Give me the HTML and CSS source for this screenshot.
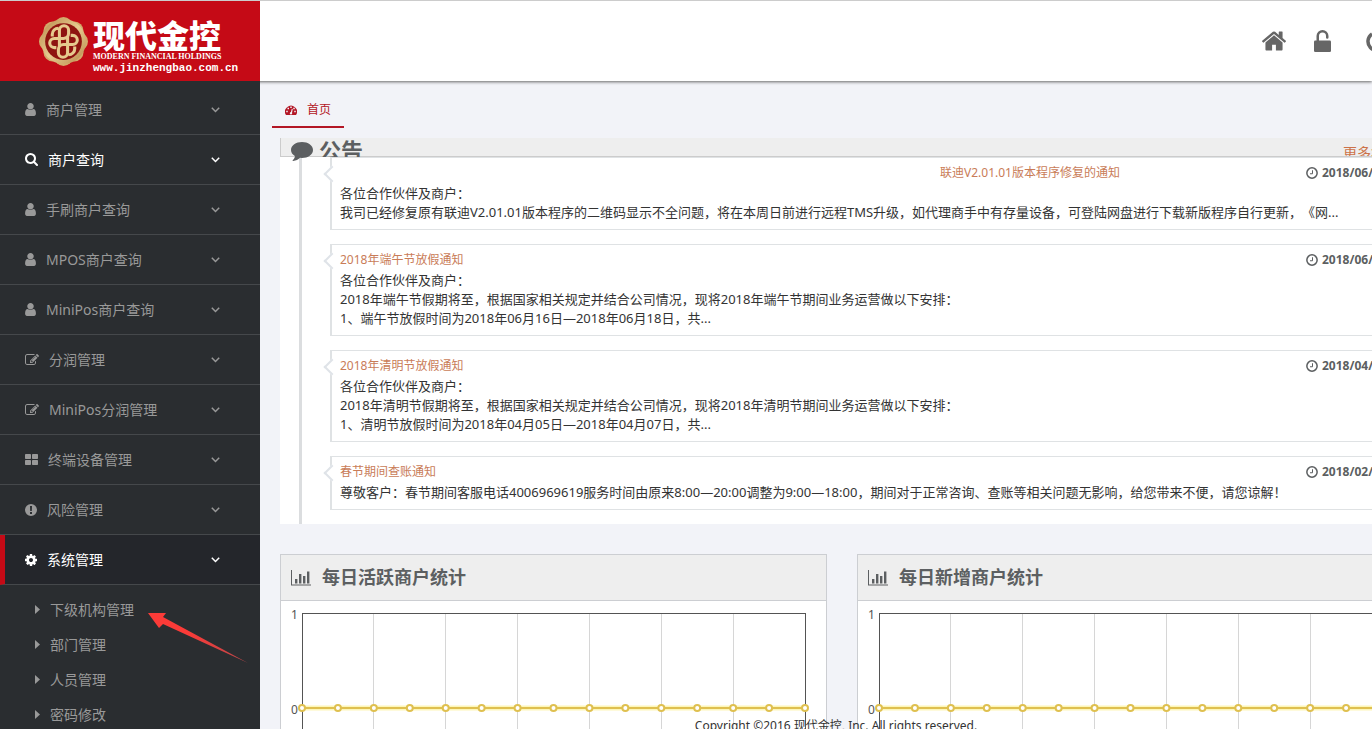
FILE: index.html
```html
<!DOCTYPE html>
<html lang="zh-CN">
<head>
<meta charset="utf-8">
<title>现代金控</title>
<link rel="stylesheet" href="styles.css">
</head>
<body>
<svg class="sprite" aria-hidden="true">
  <symbol id="i-user" viewBox="256 128 1280 1536"><path d="M1536 1399q0 109-62.500 187t-150.500 78h-854q-88 0-150.500-78t-62.500-187q0-85 8.500-160.500t31.500-152 58.500-131 94-89 134.500-34.500q131 128 313 128t313-128q76 0 134.500 34.500t94 89 58.500 131 31.500 152 8.500 160.500zm-256-887q0 159-112.500 271.500t-271.500 112.500-271.500-112.500-112.500-271.500 112.500-271.500 271.500-112.500 271.500 112.500 112.500 271.500z"/></symbol>
  <symbol id="i-search" viewBox="64 128 1664 1664"><path d="M1216 832q0-185-131.500-316.500t-316.500-131.500-316.500 131.500-131.500 316.500 131.500 316.500 316.500 131.500 316.500-131.500 131.500-316.500zm512 832q0 52-38 90t-90 38q-54 0-90-38l-343-342q-179 124-399 124-143 0-273.500-55.500t-225-150-150-225-55.500-273.500 55.500-273.500 150-225 225-150 273.500-55.500 273.500 55.500 225 150 150 225 55.500 273.500q0 220-124 399l343 343q37 37 37 90z"/></symbol>
  <symbol id="i-edit" viewBox="0 128 1792 1536"><path d="M888 1184l116-116-152-152-116 116v56h96v96h56zm440-720q-16-16-33 1l-350 350q-17 17-1 33t33-1l350-350q17-17 1-33zm80 594v190q0 119-84.500 203.500t-203.500 84.500h-832q-119 0-203.500-84.500t-84.500-203.500v-832q0-119 84.500-203.500t203.500-84.500h832q63 0 117 25 15 7 18 23 3 17-9 29l-49 49q-14 14-32 8-23-6-45-6h-832q-66 0-113 47t-47 113v832q0 66 47 113t113 47h832q66 0 113-47t47-113v-126q0-13 9-22l64-64q15-15 35-7t20 29zm-96-738l288 288-672 672h-288v-288zm444 132l-92 92-288-288 92-92q28-28 68-28t68 28l152 152q28 28 28 68t-28 68z"/></symbol>
  <symbol id="i-grid" viewBox="0 0 26 22"><rect width="12" height="10" rx="1.500"/><rect x="14" width="12" height="10" rx="1.500"/><rect y="12" width="12" height="10" rx="1.500"/><rect x="14" y="12" width="12" height="10" rx="1.500"/></symbol>
  <symbol id="i-warn" viewBox="0 0 24 24"><path fill-rule="evenodd" d="M12 0a12 12 0 1 1 0 24a12 12 0 1 1 0-24zM10 4l.4 10h3.200l.4-10zM10 16v4h4v-4z"/></symbol>
  <symbol id="i-cog" viewBox="128 128 1536 1536"><path d="M1152 896q0-106-75-181t-181-75-181 75-75 181 75 181 181 75 181-75 75-181zm512-109v222q0 12-8 23t-20 13l-185 28q-19 54-39 91 35 50 107 138 10 12 10 25t-9 23q-27 37-99 108t-94 71q-12 0-26-9l-138-108q-44 23-91 38-16 136-29 186-7 28-36 28h-222q-14 0-24.500-8.500t-11.500-21.500l-28-184q-49-16-90-37l-141 107q-10 9-25 9-14 0-25-11-126-114-165-168-7-10-7-23 0-12 8-23 15-21 51-66.500t54-70.500q-27-50-41-99l-183-27q-13-2-21-12.500t-8-23.500v-222q0-12 8-23t19-13l186-28q14-46 39-92-40-57-107-138-10-12-10-24 0-10 9-23 26-36 98.500-107.500t94.500-71.500q13 0 26 10l138 107q44-23 91-38 16-136 29-186 7-28 36-28h222q14 0 24.500 8.500t11.500 21.500l28 184q49 16 90 37l142-107q9-9 24-9 13 0 25 10 129 119 165 170 7 8 7 22 0 12-8 23-15 21-51 66.500t-54 70.500q26 50 41 98l183 28q13 2 21 12.500t8 23.500z"/></symbol>
  <symbol id="i-home" viewBox="89 250 1614 1286"><path d="M1472 992v480q0 26-19 45t-45 19h-384v-384h-256v384h-384q-26 0-45-19t-19-45v-480q0-1 .5-3t.5-3l575-474 575 474q1 2 1 6zm223-69l-62 74q-8 9-21 11h-3q-13 0-21-7l-692-577-692 577q-12 8-24 7-13-2-21-11l-62-74q-8-10-7-23.500t11-21.500l719-599q32-26 76-26t76 26l244 204v-195q0-14 9-23t23-9h192q14 0 23 9t9 23v408l219 182q10 8 11 21.500t-7 23.500z"/></symbol>
  <symbol id="i-unlock" viewBox="0 0 34 44"><rect y="21" width="34" height="23" rx="2.500"/><path d="M7.500 22v-10a9.500 9.500 0 0 1 19 0v3" fill="none" stroke="currentColor" stroke-width="5" stroke-linecap="round"/></symbol>
  <symbol id="i-power" viewBox="0 0 22 22"><path d="M6 4a9 9 0 1 0 10 0M11 1v9" fill="none" stroke="currentColor" stroke-width="3.500"/></symbol>
  <symbol id="i-down" viewBox="0 0 9 6"><path d="M.8 .8L4.500 4.500 8.200 .8" fill="none" stroke="currentColor" stroke-width="1.500"/></symbol>
  <symbol id="i-caret" viewBox="0 0 5 9"><path d="M0 0l5 4.500-5 4.500z"/></symbol>
  <symbol id="i-dash" viewBox="0 0 24 20"><path fill-rule="evenodd" d="M2 20A12 12 0 1 1 22 20zM10 16a2.200 2.200 0 1 0 4 0l1.500-8-2-.3-1.600 6.300a2.200 2.200 0 0 0-1.900 2zM10.500 3v3h3v-3zM5 5.500v3h3v-3zM16.500 5.500v3h3v-3zM2.500 11.500v3h3v-3zM18.500 11.500v3h3v-3z"/></symbol>
  <symbol id="i-comment" viewBox="0 0 22 19"><path d="M11 0c6 0 11 3.500 11 8s-5 8-11 8l-2-.2C7.200 17.600 5 18.700 2.200 19c-.6 0-.8-.6-.3-1C3 17 3.800 15.800 3.900 14 1.500 12.600 0 10.500 0 8c0-4.500 5-8 11-8z"/></symbol>
  <symbol id="i-clock" viewBox="0 0 24 24"><path d="M13 6.500v7H8" fill="none" stroke="currentColor" stroke-width="2"/><circle cx="12" cy="12" r="10.300" fill="none" stroke="currentColor" stroke-width="3"/></symbol>
  <symbol id="i-bars" viewBox="0 0 20 16"><path d="M0 0h1v14.500h19v1H0zM4 9h2.400v4.500H4zM8 4h2.400v9.500H8zM12 6h2.400v7.500H12zM16 1.500h2.400v12H16z"/></symbol>
</svg>

<div class="shell">
  <header class="topbar">
    <a class="brand" href="#">
      <svg class="emblem" viewBox="0 0 48 48" aria-hidden="true">
        <defs><linearGradient id="gold" x1="0" y1="0" x2="1" y2="1"><stop offset="0" stop-color="#b98a4b"/><stop offset=".5" stop-color="#e6cb90"/><stop offset="1" stop-color="#b88748"/></linearGradient></defs>
        <g fill="#d3ab6b"><circle cx="24" cy="24" r="20"/><circle cx="24" cy="9" r="9"/><circle cx="34.600" cy="13.400" r="9"/><circle cx="39" cy="24" r="9"/><circle cx="34.600" cy="34.600" r="9"/><circle cx="24" cy="39" r="9"/><circle cx="13.400" cy="34.600" r="9"/><circle cx="9" cy="24" r="9"/><circle cx="13.400" cy="13.400" r="9"/></g>
        <circle cx="24" cy="24" r="22" fill="url(#gold)"/>
        <circle cx="24" cy="24" r="18" fill="#8e1410"/>
        <g fill="none" stroke="#e6ca8e" stroke-width="3">
          <path id="knot" d="M20 29V13a4.500 4.500 0 0 1 9 0v3a5 5 0 0 1-5 5h-9a4.500 4.500 0 0 0 0 9h2M13 19v-2a6 6 0 0 1 6-6"/>
          <use href="#knot" transform="rotate(180 24 24)"/>
        </g>
      </svg>
      <span class="brand-text">
        <strong class="brand-name">现代金控</strong>
        <span class="brand-sub">MODERN FINANCIAL HOLDINGS</span>
        <span class="brand-url">www.jinzhengbao.com.cn</span>
      </span>
    </a>
    <nav class="tools" aria-label="工具">
      <a href="#" aria-label="首页"><svg class="ico-home"><use href="#i-home"/></svg></a>
      <a href="#" aria-label="解锁"><svg class="ico-lock"><use href="#i-unlock"/></svg></a>
      <a href="#" aria-label="退出"><svg class="ico-power"><use href="#i-power"/></svg></a>
    </nav>
  </header>

  <div class="body">
    <nav class="sidebar" aria-label="菜单">
      <ul class="menu">
        <li><a href="#"><svg class="w11"><use href="#i-user"/></svg><span>商户管理</span><svg class="chev"><use href="#i-down"/></svg></a></li>
        <li><a class="lit" href="#"><svg class="w13"><use href="#i-search"/></svg><span>商户查询</span><svg class="chev"><use href="#i-down"/></svg></a></li>
        <li><a href="#"><svg class="w11"><use href="#i-user"/></svg><span>手刷商户查询</span><svg class="chev"><use href="#i-down"/></svg></a></li>
        <li><a href="#"><svg class="w11"><use href="#i-user"/></svg><span>MPOS商户查询</span><svg class="chev"><use href="#i-down"/></svg></a></li>
        <li><a href="#"><svg class="w11"><use href="#i-user"/></svg><span>MiniPos商户查询</span><svg class="chev"><use href="#i-down"/></svg></a></li>
        <li><a href="#"><svg class="w14"><use href="#i-edit"/></svg><span>分润管理</span><svg class="chev"><use href="#i-down"/></svg></a></li>
        <li><a href="#"><svg class="w14"><use href="#i-edit"/></svg><span>MiniPos分润管理</span><svg class="chev"><use href="#i-down"/></svg></a></li>
        <li><a href="#"><svg class="w13"><use href="#i-grid"/></svg><span>终端设备管理</span><svg class="chev"><use href="#i-down"/></svg></a></li>
        <li><a href="#"><svg class="w12"><use href="#i-warn"/></svg><span>风险管理</span><svg class="chev"><use href="#i-down"/></svg></a></li>
        <li><a class="lit active" href="#"><svg class="w12"><use href="#i-cog"/></svg><span>系统管理</span><svg class="chev"><use href="#i-down"/></svg></a>
          <ul class="submenu">
            <li><a href="#"><svg><use href="#i-caret"/></svg>下级机构管理</a></li>
            <li><a href="#"><svg><use href="#i-caret"/></svg>部门管理</a></li>
            <li><a href="#"><svg><use href="#i-caret"/></svg>人员管理</a></li>
            <li><a href="#"><svg><use href="#i-caret"/></svg>密码修改</a></li>
          </ul>
        </li>
      </ul>
      <svg class="pointer" viewBox="0 0 100 50" aria-hidden="true"><defs><linearGradient id="tail"><stop offset=".4" stop-color="#fb3b38"/><stop offset="1" stop-color="#b8474a"/></linearGradient></defs><path fill="url(#tail)" d="M0 0h18l-3 4 85 46L15 11l-4 4z"/></svg>
    </nav>

    <main class="main">
      <div class="tabs"><a class="tab" href="#"><svg><use href="#i-dash"/></svg>首页</a></div>

      <section class="notices">
        <div class="notices-head">
          <svg><use href="#i-comment"/></svg>
          <h2>公告</h2>
          <a class="more" href="#">更多&gt;&gt;</a>
        </div>
        <div class="timeline">
          <article class="notice">
            <div class="notice-top"><a class="end" href="#">联迪V2.01.01版本程序修复的通知</a><time><svg><use href="#i-clock"/></svg>2018/06/</time></div>
            <p>各位合作伙伴及商户：<br>我司已经修复原有联迪V2.01.01版本程序的二维码显示不全问题，将在本周日前进行远程TMS升级，如代理商手中有存量设备，可登陆网盘进行下载新版程序自行更新，《网...</p>
          </article>
          <article class="notice">
            <div class="notice-top"><a href="#">2018年端午节放假通知</a><time><svg><use href="#i-clock"/></svg>2018/06/</time></div>
            <p>各位合作伙伴及商户：<br>2018年端午节假期将至，根据国家相关规定并结合公司情况，现将2018年端午节期间业务运营做以下安排：<br>1、端午节放假时间为2018年06月16日—2018年06月18日，共...</p>
          </article>
          <article class="notice">
            <div class="notice-top"><a href="#">2018年清明节放假通知</a><time><svg><use href="#i-clock"/></svg>2018/04/</time></div>
            <p>各位合作伙伴及商户：<br>2018年清明节假期将至，根据国家相关规定并结合公司情况，现将2018年清明节期间业务运营做以下安排：<br>1、清明节放假时间为2018年04月05日—2018年04月07日，共...</p>
          </article>
          <article class="notice">
            <div class="notice-top"><a href="#">春节期间查账通知</a><time><svg><use href="#i-clock"/></svg>2018/02/</time></div>
            <p>尊敬客户：春节期间客服电话4006969619服务时间由原来8:00—20:00调整为9:00—18:00，期间对于正常咨询、查账等相关问题无影响，给您带来不便，请您谅解！</p>
          </article>
        </div>
      </section>

      <div class="charts">
        <section class="card">
          <h3><svg><use href="#i-bars"/></svg>每日活跃商户统计</h3>
          <div class="chart"><div class="axis"><span>1</span><span>0</span></div><svg class="plot" role="img" aria-label="每日活跃商户统计"></svg></div>
        </section>
        <section class="card">
          <h3><svg><use href="#i-bars"/></svg>每日新增商户统计</h3>
          <div class="chart"><div class="axis"><span>1</span><span>0</span></div><svg class="plot" role="img" aria-label="每日新增商户统计"></svg></div>
        </section>
      </div>
    </main>
  </div>
  <footer class="footer">Copyright ©2016 现代金控, Inc. All rights reserved.</footer>
</div>
<script src="charts.js"></script>
</body>
</html>
```
FILE: styles.css
```css
* { box-sizing: border-box; }
body {
  margin: 0;
  background: #f2f3f8;
  color: #333;
  font: 13px/19px "Noto Sans", "Noto Sans CJK SC", sans-serif;
  text-spacing-trim: space-all;
}
a { color: inherit; text-decoration: none; }
ul { margin: 0; padding: 0; list-style: none; }
svg { fill: currentColor; flex: none; overflow: visible; }
.sprite { position: absolute; width: 0; height: 0; overflow: hidden; }

.shell { position: relative; height: 100vh; overflow: hidden; display: flex; flex-direction: column; }

/* Top bar */
.topbar {
  position: relative;
  z-index: 2;
  flex: none;
  display: flex;
  justify-content: space-between;
  height: 81px;
  background: #fff;
  border-top: 1px solid #ccc;
  box-shadow: 0 1px 3px #666;
}
.brand {
  display: flex;
  width: 260px;
  padding: 16px 0 0 39px;
  gap: 5px;
  background: #c50a16;
  color: #fff;
}
.emblem { width: 49px; height: 49px; }
.brand-text { display: flex; flex-direction: column; padding-top: 2px; white-space: nowrap; }
.brand-name { font-size: 32px; line-height: 34px; font-weight: 900; }
.brand-sub { font: bold 8px/8px "Liberation Serif", serif; }
.brand-url { font: bold 11px/12px "Liberation Mono", monospace; padding-top: 1px; }
.tools { display: flex; align-items: center; color: #666; margin-right: -16px; }
.tools a { display: flex; }
.ico-home { width: 24px; height: 20px; margin-right: 28px; }
.ico-lock { width: 17px; height: 22px; margin-right: 35px; }
.ico-power { width: 22px; height: 22px; }

.body { flex: 1; display: flex; min-height: 0; }

/* Sidebar */
.sidebar {
  position: relative;
  z-index: 3;
  flex: none;
  width: 260px;
  padding-top: 4px;
  background: #2a2d30;
  color: #999;
  font-size: 14px;
}
.menu > li > a {
  display: flex;
  align-items: center;
  gap: 10px;
  height: 50px;
  padding: 0 40px 0 25px;
  border-bottom: 1px solid #45484b;
}
.menu > li > a span { flex: 1; }
.menu .lit { color: #fff; }
.menu > li > .active { background: #24262b; border-left: 5px solid #c50a16; padding-left: 20px; }
.menu .w11 { width: 11px; height: 13px; }
.menu .w12 { width: 12px; height: 12px; }
.menu .w13 { width: 13px; height: 13px; }
.menu .w14 { width: 14px; height: 12px; }
.menu .chev { width: 9px; height: 6px; }
.submenu { padding-top: 7px; }
.submenu a { display: flex; align-items: center; gap: 10px; height: 35px; padding-left: 35px; }
.submenu svg { width: 5px; height: 9px; }
.pointer { position: absolute; left: 148px; top: 532px; width: 100px; height: 50px; }

/* Content */
.main { flex: 1 0 auto; min-width: 1164px; padding: 12px 20px 0; width: 0; }
.tabs { display: flex; margin-left: -8px; }
.tab {
  display: flex;
  align-items: center;
  gap: 10px;
  height: 35px;
  padding: 0 13px;
  border-bottom: 2px solid #b31625;
  color: #b31625;
  font-size: 12px;
}
.tab svg { width: 12px; height: 10px; }

.notices { margin-top: 10px; background: #fff; }
.notices-head {
  display: flex;
  height: 19px;
  padding-left: 10px;
  gap: 6px;
  background: #eee;
  border-left: 1px solid #ccc;
  border-bottom: 1px solid #ccc;
  color: #5c5f61;
}
.notices-head svg { position: relative; z-index: 1; width: 22px; height: 19px; margin-top: 4px; }
.notices-head h2 { flex: 1; margin: 0; height: 19px; overflow: hidden; font-size: 22px; line-height: 24px; }
.more { width: 61px; height: 18px; overflow: hidden; color: #cc7248; font-size: 14px; line-height: 30px; }

.timeline {
  margin-left: 19px;
  padding: 0 14px 14px 28px;
  border-left: 3px solid #dbdddf;
  display: grid;
  gap: 14px;
}
.notice {
  position: relative;
  padding: 5px 0 7px 8px;
  border: 1px solid #dfe2e4;
  border-left-width: 2px;
}
.notice::before {
  content: "";
  position: absolute;
  left: -6px;
  top: 10px;
  width: 10px;
  height: 10px;
  background: #fff;
  border: solid #dfe3e8;
  border-width: 0 0 2px 2px;
  transform: rotate(45deg);
}
.notice-top { display: flex; justify-content: space-between; font-size: 12px; }
.notice-top a { color: #c97c58; }
.notice-top .end { flex: 1; text-align: right; padding-right: 186px; }
.notice-top time { display: flex; align-items: center; gap: 4px; width: 83px; color: #5c5f61; font-weight: bold; }
.notice-top svg { width: 12px; height: 12px; }
.notice p { margin: 2px 0 0; }

/* Charts */
.charts { display: grid; grid-template-columns: 1fr 1fr; gap: 30px; margin-top: 30px; }
.card { border: 1px solid #ccced2; background: #fff; }
.card h3 {
  display: flex;
  align-items: center;
  gap: 11px;
  height: 46px;
  margin: 0;
  padding-left: 10px;
  background: #eee;
  border-bottom: 1px solid #ccced2;
  color: #5c5f61;
  font-size: 18px;
}
.card h3 svg { width: 20px; height: 16px; }
.chart { display: flex; gap: 2px; padding: 12px 21px 0 10px; }
.axis { display: flex; flex-direction: column; justify-content: space-between; width: 9px; height: 107px; margin-top: -4px; font-size: 12px; line-height: 12px; color: #545454; }
.plot { flex: 1; height: 190px; width: 0; }
.plot .grid { stroke: #d6d6d6; }
.plot .frame { fill: none; stroke: #545454; }
.plot .glow { stroke: #fdf6b8; stroke-width: 5; }
.plot .series { stroke: #dfc050; stroke-width: 2; }
.plot .dot { fill: #fff; stroke: #dfc050; stroke-width: 2; }

.footer { position: absolute; left: 300px; right: 0; bottom: -6px; text-align: center; font-size: 12px; }
```
FILE: charts.js
```javascript
const NS = "http://www.w3.org/2000/svg";
const POINTS = 15;
const ZERO_Y = 95;

function add(svg, name, attrs) {
  const el = document.createElementNS(NS, name);
  for (const key in attrs) el.setAttribute(key, attrs[key]);
  svg.appendChild(el);
}

document.querySelectorAll(".plot").forEach((svg) => {
  const x = (i) => (100 * i) / (POINTS - 1) + "%";
  for (let i = 2; i < POINTS - 1; i += 2) {
    add(svg, "line", { class: "grid", x1: x(i), x2: x(i), y1: 0, y2: "100%", "shape-rendering": "crispEdges" });
  }
  add(svg, "rect", { class: "frame", x: 0, y: 0, width: "100%", height: "100%", "shape-rendering": "crispEdges" });
  add(svg, "line", { class: "glow", x1: 0, x2: "100%", y1: ZERO_Y, y2: ZERO_Y });
  add(svg, "line", { class: "series", x1: 0, x2: "100%", y1: ZERO_Y, y2: ZERO_Y });
  for (let i = 0; i < POINTS; i++) {
    add(svg, "circle", { class: "dot", cx: x(i), cy: ZERO_Y, r: 3 });
  }
});
```
